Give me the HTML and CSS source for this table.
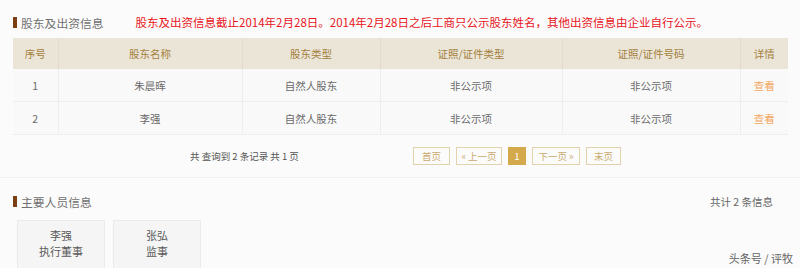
FILE: index.html
```html
<!DOCTYPE html>
<html lang="zh-CN">
<head>
<meta charset="utf-8">
<title>股东及出资信息</title>
<link rel="stylesheet" href="styles.css">
</head>
<body>
<div class="page">
  <div class="sec-title">
    <span class="mark"></span><span class="title">股东及出资信息</span>
    <span class="notice">股东及出资信息截止2014年2月28日。2014年2月28日之后工商只公示股东姓名，其他出资信息由企业自行公示。</span>
  </div>
  <table class="grid">
    <colgroup>
      <col class="c1"><col class="c2"><col class="c3"><col class="c4"><col class="c5"><col class="c6">
    </colgroup>
    <thead>
      <tr><th>序号</th><th>股东名称</th><th>股东类型</th><th>证照/证件类型</th><th>证照/证件号码</th><th>详情</th></tr>
    </thead>
    <tbody>
      <tr><td>1</td><td>朱晨晖</td><td>自然人股东</td><td>非公示项</td><td>非公示项</td><td class="link">查看</td></tr>
      <tr><td>2</td><td>李强</td><td>自然人股东</td><td>非公示项</td><td>非公示项</td><td class="link">查看</td></tr>
    </tbody>
  </table>
  <div class="pager">
    <span class="summary">共 查询到 2 条记录 共 1 页</span>
    <div class="btns">
      <span class="btn w37">首页</span>
      <span class="btn w46">« 上一页</span>
      <span class="btn active">1</span>
      <span class="btn w48">下一页 »</span>
      <span class="btn w35">末页</span>
    </div>
  </div>
  <div class="sec-title sec2">
    <span class="mark"></span><span class="title">主要人员信息</span>
    <span class="count">共计 2 条信息</span>
  </div>
  <div class="cards">
    <div class="card"><div>李强</div><div>执行董事</div></div>
    <div class="card"><div>张弘</div><div>监事</div></div>
  </div>
  <div class="watermark">头条号 / 评牧</div>
</div>
</body>
</html>
```
FILE: styles.css
```css
html, body {
  margin: 0;
  padding: 0;
  background: #fbfbfb;
}
.page {
  position: relative;
  width: 800px;
  height: 268px;
  overflow: hidden;
  font-family: "Noto Sans CJK SC", "Noto Sans", sans-serif;
  color: #666;
}
.sec-title {
  display: flex;
  align-items: center;
  height: 16px;
  padding: 14px 0 0 13px;
}
.mark {
  width: 4px;
  height: 11px;
  background: #7a3f12;
  margin-right: 4px;
}
.title {
  font-size: 11.8px;
  color: #707070;
}
.notice {
  font-size: 11.5px;
  color: #e8141b;
  margin-left: 32px;
}
.grid {
  margin: 8px 0 0 13px;
  width: 775px;
  border-collapse: collapse;
  table-layout: fixed;
  font-size: 10.5px;
}
.c1 { width: 45px; }
.c2 { width: 184px; }
.c3 { width: 138px; }
.c4 { width: 182px; }
.c5 { width: 178px; }
.c6 { width: 48px; }
.grid th {
  height: 31px;
  background: #ebe5d8;
  color: #a3803c;
  font-weight: normal;
  border-left: 1px solid #e3dccd;
  padding: 0;
}
.grid th:first-child, .grid td:first-child { border-left: none; }
.grid td {
  height: 32px;
  padding: 0;
  text-align: center;
  background: #f9f9f9;
  color: #6a6a6a;
  border-left: 1px solid #eeeeee;
  border-bottom: 1px solid #eeeeee;
}
.grid td.link { color: #f2a860; }
.pager {
  display: flex;
  align-items: center;
  height: 42px;
  padding-left: 190px;
  border-bottom: 1px solid #efefef;
  font-size: 9.5px;
}
.summary {
  color: #555;
  width: 223px;
}
.btns {
  display: flex;
  gap: 6px;
}
.btn {
  box-sizing: border-box;
  height: 18px;
  line-height: 16px;
  border: 1px solid #e3d2ae;
  color: #c9aa6d;
  text-align: center;
  font-size: 9.5px;
}
.w37 { width: 37px; }
.w46 { width: 46px; }
.w48 { width: 48px; }
.w35 { width: 35px; }
.btn.active {
  width: 18px;
  background: #d4a94c;
  border-color: #d4a94c;
  color: #fff;
}
.sec2 {
  padding-top: 15px;
  padding-right: 27px;
}
.count {
  margin-left: auto;
  font-size: 10.5px;
  color: #666;
}
.cards {
  display: flex;
  gap: 8px;
  padding: 11px 0 0 17px;
}
.card {
  box-sizing: border-box;
  width: 88px;
  height: 49px;
  padding-top: 6px;
  background: #f5f5f5;
  border: 1px solid #eaeaea;
  text-align: center;
  font-size: 11px;
  line-height: 16px;
  color: #5a5a5a;
}
.watermark {
  position: absolute;
  right: 7px;
  bottom: 2px;
  font-size: 11px;
  color: #666;
}
```
